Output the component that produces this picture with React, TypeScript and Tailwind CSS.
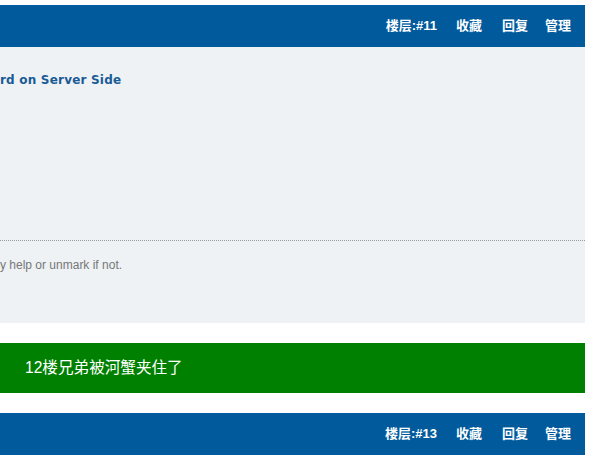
export default function App() {
  const cjk = { fontFamily: '"Liberation Sans", "Noto Sans CJK SC", sans-serif' };

  const Bar = ({ floor }: { floor: string }) => (
    <div className="h-[42px] bg-[#005a9c] flex items-center justify-end pr-[14px] text-white text-[13px] font-bold">
      <span>楼层:#{floor}</span>
      <span className="ml-[19px]">收藏</span>
      <span className="ml-[20px]">回复</span>
      <span className="ml-[17px]">管理</span>
    </div>
  );

  return (
    <div className="w-[591px] h-[456px] bg-white overflow-hidden" style={cjk}>
      <div className="w-[585px] pt-[5px]">
        <Bar floor="11" />

        {/* post body */}
        <div className="h-[276px] bg-[#eef2f4] flex flex-col">
          <div className="pt-[26px] text-[12px] font-bold text-[#1a5b95] leading-[14px] tracking-[0.2px] font-['DejaVu_Sans',sans-serif]">
            rd on Server Side
          </div>
          <div className="mt-[153px] border-t border-dotted border-[#999]" />
          <div className="pt-[17px] text-[12px] text-[#777] leading-[14px]">
            y help or unmark if not.
          </div>
        </div>

        {/* deleted floor notice */}
        <div className="mt-[20px] h-[50px] bg-[#008000] flex items-center pl-[25px] text-white text-[15.6px]">
          12楼兄弟被河蟹夹住了
        </div>

        <div className="mt-[20px]">
          <Bar floor="13" />
        </div>
      </div>
    </div>
  );
}
